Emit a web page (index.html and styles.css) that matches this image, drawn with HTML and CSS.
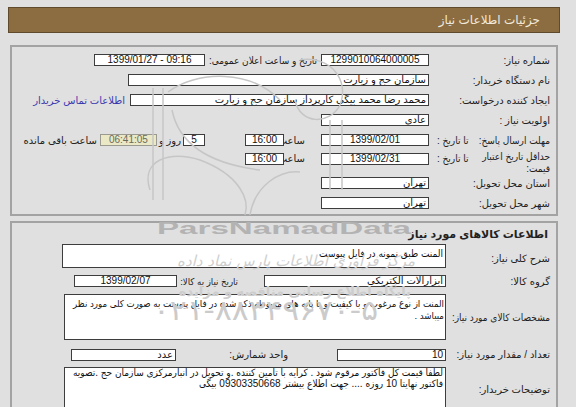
FILE: index.html
```html
<!DOCTYPE html>
<html lang="fa">
<head>
<meta charset="utf-8">
<title>جزئیات اطلاعات نیاز</title>
<link rel="stylesheet" href="styles.css">
</head>
<body>
<div class="page">
  <div class="hdr">جزئیات اطلاعات نیاز</div>

  <div class="panel p1">
    <div class="row">
      <div class="lbl">شماره نیاز:</div>
      <div class="box c w108">1299010064000005</div>
      <div class="lbl2 cond">تاریخ و ساعت اعلان عمومی:</div>
      <div class="box c w111 ltr">1399/01/27 - 09:16</div>
    </div>
    <div class="row">
      <div class="lbl">نام دستگاه خریدار:</div>
      <div class="box w301">سازمان حج و زیارت</div>
    </div>
    <div class="row">
      <div class="lbl">ایجاد کننده درخواست:</div>
      <div class="box w299">محمد رضا محمد بیگی کارپرداز سازمان حج و زیارت</div>
      <a class="link">اطلاعات تماس خریدار</a>
    </div>
    <div class="row">
      <div class="lbl">اولویت نیاز :</div>
      <div class="box w108">عادی</div>
    </div>
    <div class="row">
      <div class="lbl split cond"><span>مهلت ارسال پاسخ:</span><span class="to">تا تاریخ :</span></div>
      <div class="box c w108">1399/02/01</div>
      <div class="hour">ساعت</div>
      <div class="box c w39">16:00</div>
      <div class="box c w22 days">5</div>
      <div class="txt">روز و</div>
      <div class="box c w57 remain">06:41:05</div>
      <div class="txt rem">ساعت باقی مانده</div>
    </div>
    <div class="row tall">
      <div class="lbl split cond"><span class="two">حداقل تاریخ اعتبار<br>قیمت:</span><span class="to">تا تاریخ :</span></div>
      <div class="box c w108">1399/02/31</div>
      <div class="hour">ساعت</div>
      <div class="box c w39">16:00</div>
    </div>
    <div class="row">
      <div class="lbl">استان محل تحویل:</div>
      <div class="box w108">تهران</div>
    </div>
    <div class="row">
      <div class="lbl">شهر محل تحویل:</div>
      <div class="box w108">تهران</div>
    </div>
  </div>

  <div class="panel p2">
    <div class="title">اطلاعات کالاهای مورد نیاز</div>
    <div class="row2 r-desc">
      <div class="lbl l2">شرح کلی نیاز:</div>
      <div class="box multi w384 h24">المنت طبق نمونه در فایل پیوست</div>
    </div>
    <div class="row2 r-grp">
      <div class="lbl l2">گروه کالا:</div>
      <div class="box w182">ابزارآلات الکتریکی</div>
      <div class="lbl3 need cond">تاریخ نیاز به کالا:</div>
      <div class="box c w103">1399/02/07</div>
    </div>
    <div class="row2 r-spec">
      <div class="lbl l2 cond">مشخصات کالای مورد نیاز:</div>
      <div class="box multi w382 h46 spec">المنت از نوع مرغوب و با کیفیت و با پایه های مربوطه ذکر شده در فایل پیوست به صورت کلی مورد نظر میباشد .</div>
    </div>
    <div class="row2 r-qty">
      <div class="lbl l2">تعداد / مقدار مورد نیاز:</div>
      <div class="box w109 num">10</div>
      <div class="lbl3 unit">واحد شمارش:</div>
      <div class="box w105">عدد</div>
    </div>
    <div class="row2 r-note">
      <div class="lbl l2">توضیحات خریدار:</div>
      <div class="box multi w382 h50 note">لطفا قیمت کل فاکتور مرقوم شود . کرایه با تامین کننده .و تحویل در انبارمرکزی سازمان حج .تصویه فاکتور نهایتا 10 روزه .... جهت اطلاع بیشتر 09303350668 بیگی</div>
    </div>
  </div>
</div>

<svg class="wm" width="576" height="407" viewBox="0 0 576 407" aria-hidden="true">
  <g fill="none" stroke="#c6c6c6" stroke-width="1.5">
    <path d="M153 88 V200 M163 88 V200"/>
    <path d="M168 92 C200 70 250 70 280 100"/>
    <path d="M172 110 C180 150 220 165 260 170"/>
    <path d="M150 190 C140 160 170 150 200 160 C240 175 250 200 245 215"/>
    <path d="M250 215 C255 185 280 170 300 172"/>
    <path d="M300 60 C330 55 350 80 340 105 C330 125 300 125 295 100"/>
    <path d="M330 120 V190 M342 120 V190"/>
  </g>
  <text x="157" y="234" class="wm-en" textLength="254" lengthAdjust="spacingAndGlyphs">ParsNamadData</text>
  <text x="415" y="266" class="wm-fa1" direction="rtl" text-anchor="start">مرکز فراوری اطلاعات پارس نماد داده</text>
  <text x="411" y="296" class="wm-fa2" direction="rtl" text-anchor="start">پایگاه اطلاع رسانی مناقصه و مزایده</text>
  <text x="153" y="320" class="wm-ph" textLength="225" lengthAdjust="spacingAndGlyphs">۰۲۱-۸۸۳۴۹۶۷۰-۵</text>
</svg>
</body>
</html>
```

FILE: styles.css
```css
* { box-sizing: border-box; }

body {
  margin: 0;
  background: #e0e0e0;
  font-family: "Liberation Sans", "DejaVu Sans", sans-serif;
  font-size: 10px;
  color: #222;
  position: relative;
  height: 407px;
  overflow: hidden;
}

.page {
  direction: rtl;
  width: 552px;
  margin-left: 8px;
  padding-top: 7px;
}

.cond {
  font-family: "Liberation Sans", "DejaVu Sans Condensed", "DejaVu Sans", sans-serif;
}

.ltr { direction: ltr; }

.hdr {
  height: 26px;
  background: #8c6d41;
  border: 1px solid #5f4a2c;
  color: #f1e9dc;
  font-size: 12px;
  line-height: 24px;
  padding-right: 19px;
}

.panel {
  margin: 0 2px;
  border: 2px solid #a3a3a3;
}

.p1 {
  margin-top: 12px;
  padding: 3px 6px 1px 0;
}

.p2 {
  margin-top: 5px;
  padding: 0 6px 0 0;
  height: 200px;
}

.row {
  display: flex;
  align-items: center;
  height: 20px;
}

.row.tall {
  height: 23px;
  align-items: flex-start;
  padding-top: 3px;
}

.lbl {
  width: 121px;
  flex: none;
  white-space: nowrap;
}

.lbl.split {
  display: flex;
  align-items: center;
}

.lbl.split .to {
  margin-right: auto;
  margin-left: 8px;
}

.tall .lbl.split { align-items: flex-start; }

.two {
  line-height: 12px;
  margin-top: -2px;
}

.tall .to { margin-top: 0; }

.lbl2 {
  width: 116px;
  flex: none;
  padding-right: 4px;
  white-space: nowrap;
}

.box {
  background: #fff;
  border: 1px solid #3d3d3d;
  height: 12px;
  line-height: 10px;
  padding: 0 2px;
  flex: none;
  white-space: nowrap;
  overflow: hidden;
  color: #111;
}

.c { text-align: center; }
.num { direction: rtl; }

.w22 { width: 22px; }
.w39 { width: 39px; }
.w57 { width: 57px; }
.w103 { width: 103px; }
.w105 { width: 105px; }
.w108 { width: 108px; }
.w109 { width: 109px; }
.w111 { width: 111px; }
.w182 { width: 182px; }
.w299 { width: 299px; }
.w301 { width: 301px; }
.w382 { width: 382px; }
.w384 { width: 384px; }

.link {
  color: #3a3ab0;
  margin-right: 5px;
  white-space: nowrap;
}

.hour {
  width: 37px;
  flex: none;
  padding-right: 16px;
  white-space: nowrap;
}

.days { margin-right: 40px; }

.txt {
  white-space: nowrap;
  padding: 0 2px;
}

.remain {
  background: #ebe8c6;
  border-color: #9a9a90;
  color: #6a6a5a;
}

.rem { padding-right: 3px; }

.title {
  font-weight: bold;
  font-size: 11px;
  line-height: 18px;
  height: 20px;
  padding-top: 2px;
  padding-right: 2px;
}

.row2 {
  display: flex;
  align-items: center;
}

.l2 { width: 104px; }

.r-desc { height: 27px; align-items: flex-start; padding-top: 1px; }
.r-desc .lbl { margin-top: 9px; }
.r-grp { height: 22px; }
.r-spec { height: 50px; }
.r-qty { height: 25px; }
.r-note { height: 52px; align-items: flex-start; }
.r-note .lbl { margin-top: 17px; }

.multi {
  white-space: normal;
  line-height: 11px;
  padding: 2px 2px 0;
  font-family: "Liberation Sans", "DejaVu Sans Condensed", "DejaVu Sans", sans-serif;
}

.h24 { height: 24px; padding-top: 3px; }
.h46 { height: 46px; padding-top: 3px; }
.h50 { height: 50px; }
.spec { font-size: 9.6px; line-height: 12px; padding-right: 1px; padding-left: 1px; }
.note { padding-top: 0; line-height: 10.5px; }

.lbl3 {
  flex: none;
  white-space: nowrap;
}

.need { width: 87px; padding-right: 26px; font-size: 9.5px; }
.unit { width: 161px; padding-right: 49px; }

.wm {
  position: absolute;
  left: 0;
  top: 0;
  pointer-events: none;
}

.wm-en {
  font-family: "Liberation Sans", sans-serif;
  font-weight: bold;
  font-size: 16px;
  fill: #b3b3b3;
}

.wm-fa1 {
  font-family: "DejaVu Sans", sans-serif;
  font-size: 15px;
  font-style: italic;
  fill: #cfcfcf;
}

.wm-fa2 {
  font-family: "DejaVu Sans", sans-serif;
  font-size: 13px;
  font-weight: bold;
  fill: #cdcdcd;
}

.wm-ph {
  font-family: "DejaVu Sans", sans-serif;
  font-size: 28px;
  fill: #cbcbcb;
}
```
